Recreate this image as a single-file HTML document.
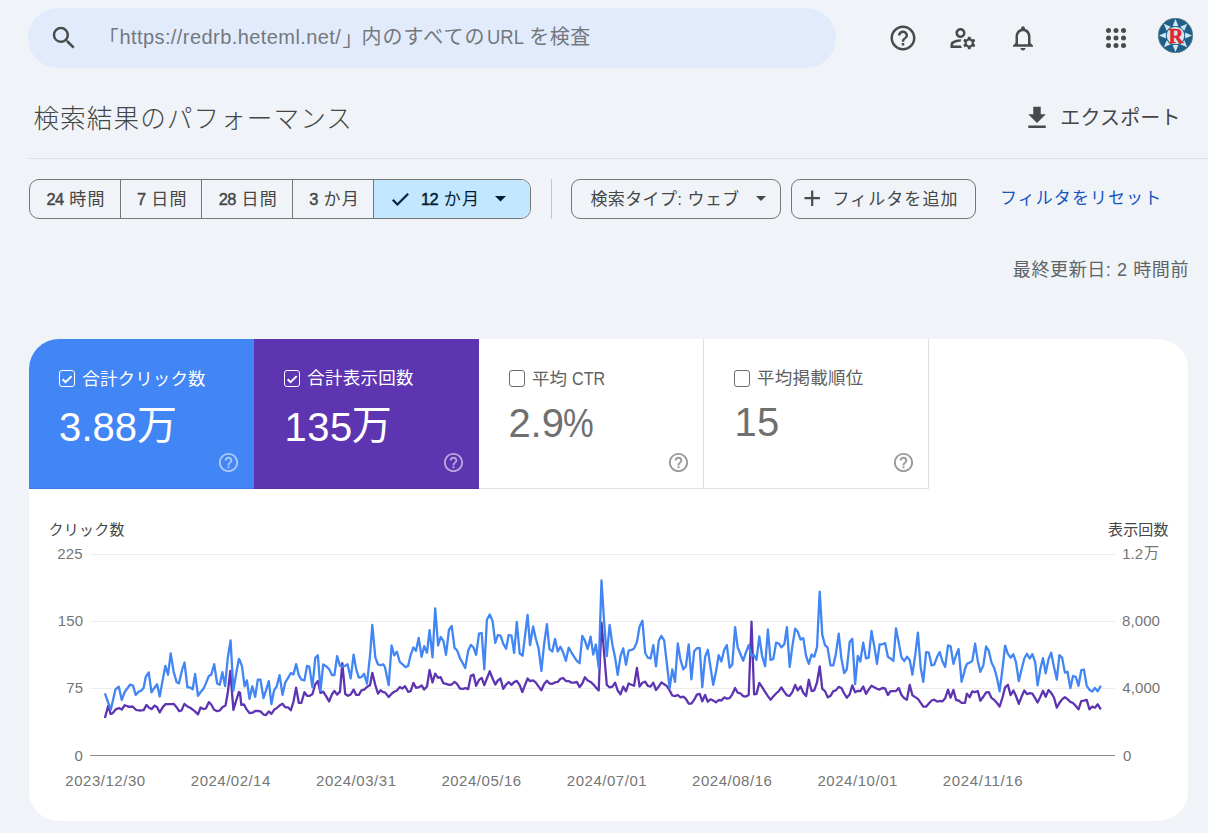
<!DOCTYPE html><html lang="ja"><head><meta charset="utf-8"><title>検索結果のパフォーマンス</title><style>
*{box-sizing:border-box;margin:0;padding:0}
html,body{width:1208px;height:833px;overflow:hidden}
body{background:#f0f4f9;font-family:"Liberation Sans","Noto Sans CJK JP",sans-serif;color:#444746;position:relative}
.abs{position:absolute}
.t{position:absolute;white-space:nowrap;line-height:1;transform-origin:0 50%}
svg{position:absolute;display:block;overflow:visible}
#search{left:28px;top:8px;width:808px;height:60px;border-radius:30px;background:#e2ebfc}
#hr{left:28px;top:158px;width:1180px;height:1px;background:#dde1e6}
.chip{position:absolute;top:179px;height:40px;border:1px solid #747775;border-radius:9px}
#vsep{left:551px;top:179px;width:1px;height:40px;background:#c4c7c5}
#card{left:29px;top:339px;width:1159px;height:482px;border-radius:30px;background:#fff;overflow:hidden}
.tile{position:absolute;top:0;width:225px;height:150px}
.cb{position:absolute;width:16.500px;height:16.500px;border:1.500px solid #fff;border-radius:3px}
</style></head><body>
<div class="abs" id="search"></div>
<svg style="left:48.75px;top:23.25px" width="30" height="30" viewBox="0 0 24 24" ><path fill="#484a4c" d="M15.5 14h-.79l-.28-.27A6.471 6.471 0 0 0 16 9.5 6.5 6.5 0 1 0 9.5 16c1.61 0 3.09-.59 4.23-1.57l.27.28v.79l5 4.99L20.49 19l-4.99-5zm-6 0C7.01 14 5 11.99 5 9.500S7.010 5 9.500 5 14 7.010 14 9.500 11.990 14 9.500 14z"/></svg>
<div class="abs" style="left:0;top:0"><span class="t" style="font-size:20px;color:#74777c;left:98.5px;top:29.2px;">「</span><span class="t" style="font-size:20px;color:#74777c;left:119.38px;top:27.17px;letter-spacing:0.43px;">https://redrb.heteml.net/</span><span class="t" style="font-size:20px;color:#74777c;left:342.6px;top:29.2px;">」</span><span class="t" style="font-size:20px;color:#74777c;left:361.48px;top:27.33px;letter-spacing:1.04px;">内のすべての</span> <span class="t" style="font-size:20px;color:#74777c;left:487.43px;top:27.17px;transform:scaleX(0.922);">URL</span> <span class="t" style="font-size:20px;color:#74777c;left:529.17px;top:27.33px;letter-spacing:0.57px;">を検査</span></div>
<svg style="left:888.00px;top:23.00px" width="30" height="30" viewBox="0 0 24 24" ><path fill="#484a4c" d="M11 18h2v-2h-2v2zm1-16C6.480 2 2 6.480 2 12s4.480 10 10 10 10-4.480 10-10S17.520 2 12 2zm0 18c-4.410 0-8-3.590-8-8s3.590-8 8-8 8 3.590 8 8-3.590 8-8 8zm0-14c-2.210 0-4 1.790-4 4h2c0-1.100.9-2 2-2s2 .9 2 2c0 2-3 1.750-3 5h2c0-2.250 3-2.500 3-5 0-2.210-1.790-4-4-4z"/></svg>
<svg style="left:948.00px;top:23.00px" width="30" height="30" viewBox="0 0 24 24" ><path fill="#484a4c" d="M4 18v-.65c0-.34.16-.66.41-.81C6.100 15.530 8.030 15 10 15c.03 0 .05 0 .08.01.1-.7.3-1.370.59-1.980-.22-.02-.44-.03-.67-.03-2.420 0-4.680.67-6.610 1.820-.88.52-1.390 1.500-1.390 2.530V20h9.260c-.42-.6-.75-1.280-.97-2H4z M10 12c2.210 0 4-1.790 4-4s-1.790-4-4-4-4 1.790-4 4 1.790 4 4 4zm0-6c1.100 0 2 .9 2 2s-.9 2-2 2-2-.9-2-2 .9-2 2-2z M20.750 16c0-.22-.03-.42-.06-.63l1.140-1.010-1-1.730-1.450.49c-.32-.27-.68-.48-1.080-.63L18 11h-2l-.3 1.490c-.4.15-.76.36-1.080.63l-1.450-.49-1 1.730 1.140 1.010c-.03.21-.06.41-.06.63s.03.42.06.63l-1.140 1.010 1 1.730 1.450-.49c.32.27.68.48 1.080.63L16 21h2l.3-1.490c.4-.15.76-.36 1.080-.63l1.450.49 1-1.730-1.140-1.010c.03-.21.06-.41.06-.63zM17 18c-1.100 0-2-.9-2-2s.9-2 2-2 2 .9 2 2-.9 2-2 2z"/></svg>
<svg style="left:1008.00px;top:23.00px" width="30" height="30" viewBox="0 0 24 24" ><path fill="#484a4c" d="M12 22c1.100 0 2-.9 2-2h-4c0 1.100.9 2 2 2zm6-6v-5c0-3.070-1.630-5.640-4.500-6.320V4c0-.83-.67-1.500-1.500-1.500s-1.500.67-1.500 1.500v.68C7.640 5.360 6 7.920 6 11v5l-2 2v1h16v-1l-2-2zm-2 1H8v-6c0-2.480 1.510-4.500 4-4.500s4 2.020 4 4.500v6z"/></svg>
<svg style="left:1101px;top:23px" width="30" height="30" viewBox="0 0 24 24" fill="#484a4c"><circle cx="6" cy="6" r="2" /><circle cx="6" cy="12" r="2" /><circle cx="6" cy="18" r="2" /><circle cx="12" cy="6" r="2" /><circle cx="12" cy="12" r="2" /><circle cx="12" cy="18" r="2" /><circle cx="18" cy="6" r="2" /><circle cx="18" cy="12" r="2" /><circle cx="18" cy="18" r="2" /></svg>
<svg style="left:1157.80px;top:17.80px" width="35" height="35" viewBox="-17.5 -17.5 35 35"><circle r="17.5" fill="#1d5f88"/><circle r="17.1" fill="none" stroke="#b9a878" stroke-width="0.700" opacity=".55"/><g fill="#cfe6f4"><polygon points="0,-16.5 -2.9,-9.6 2.900,-9.6" transform="rotate(0)"/><polygon points="0,-16.5 -2.9,-9.6 2.900,-9.6" transform="rotate(45)"/><polygon points="0,-16.5 -2.9,-9.6 2.900,-9.6" transform="rotate(90)"/><polygon points="0,-16.5 -2.9,-9.6 2.900,-9.6" transform="rotate(135)"/><polygon points="0,-16.5 -2.9,-9.6 2.900,-9.6" transform="rotate(180)"/><polygon points="0,-16.5 -2.9,-9.6 2.900,-9.6" transform="rotate(225)"/><polygon points="0,-16.5 -2.9,-9.6 2.900,-9.6" transform="rotate(270)"/><polygon points="0,-16.5 -2.9,-9.6 2.900,-9.6" transform="rotate(315)"/></g><circle r="8.8" fill="#d3e4ef"/><text x="0.300" y="7" text-anchor="middle" font-family="Liberation Serif,serif" font-weight="bold" font-size="20.500" fill="#e0262b" stroke="#e0262b" stroke-width="0.500">R</text></svg>
<div class="t" style="font-size:25.6px;color:#444746;font-family:'Noto Sans CJK JP',sans-serif;font-weight:300;left:33.45px;top:104.31px;letter-spacing:1.08px;">検索結果のパフォーマンス</div>
<svg style="left:1021.60px;top:103.10px" width="30" height="30" viewBox="0 0 24 24" ><path fill="#484a4c" d="M19 9h-4V3H9v6H5l7 7 7-7zM5 18v2h14v-2H5z"/></svg>
<div class="t" style="font-size:20px;color:#444746;left:1060.28px;top:108.25px;letter-spacing:0.16px;">エクスポート</div>
<div class="abs" id="hr"></div>
<div class="abs" style="left:29px;top:179px;width:502px;height:40px;border:1px solid #747775;border-radius:10px;overflow:hidden"><div class="abs" style="left:344px;top:0;width:158px;height:38px;background:#c2e7ff"></div><div class="abs" style="left:90px;top:0;width:1px;height:38px;background:#747775"></div><div class="abs" style="left:171px;top:0;width:1px;height:38px;background:#747775"></div><div class="abs" style="left:262px;top:0;width:1px;height:38px;background:#747775"></div><div class="abs" style="left:343px;top:0;width:1px;height:38px;background:#747775"></div></div>
<div class="t" style="font-size:17px;color:#444746;left:46.5px;top:190.82px;letter-spacing:1.2px;"><span style="-webkit-text-stroke:.45px currentColor;font-size:16.4px;letter-spacing:-.7px">24</span> 時間</div>
<div class="t" style="font-size:17px;color:#444746;left:137.05px;top:190.82px;letter-spacing:1.17px;"><span style="-webkit-text-stroke:.45px currentColor;font-size:16.4px;letter-spacing:-.7px">7</span> 日間</div>
<div class="t" style="font-size:17px;color:#444746;left:218.75px;top:190.82px;letter-spacing:1.2px;"><span style="-webkit-text-stroke:.45px currentColor;font-size:16.4px;letter-spacing:-.7px">28</span> 日間</div>
<div class="t" style="font-size:17px;color:#444746;left:309.25px;top:190.82px;letter-spacing:1.2px;"><span style="-webkit-text-stroke:.45px currentColor;font-size:16.4px;letter-spacing:-.7px">3</span> か月</div>
<div class="t" style="font-size:17px;color:#001d35;left:421.1px;top:190.82px;letter-spacing:1.2px;"><span style="-webkit-text-stroke:.45px currentColor;font-size:16.4px;letter-spacing:-.7px">12</span> か月</div>
<svg style="left:389.35px;top:187.75px" width="22.5" height="22.5" viewBox="0 0 24 24" stroke="#001d35" stroke-width=".5"><path fill="#001d35" d="M9 16.170L4.830 12l-1.420 1.410L9 19 21 7l-1.410-1.410z"/></svg>
<svg style="left:495.400px;top:196.200px" width="11" height="5.500" viewBox="0 0 10 5"><path d="M0 0h10L5 5z" fill="#001d35"/></svg>
<div class="abs" id="vsep"></div>
<div class="chip" style="left:571px;width:210px"></div>
<div class="t" style="font-size:17px;color:#444746;left:590.42px;top:190.7px;letter-spacing:0.39px;">検索タイプ: ウェブ</div>
<svg style="left:755.500px;top:196.300px" width="10" height="5" viewBox="0 0 10 5"><path d="M0 0h10L5 5z" fill="#444746"/></svg>
<div class="chip" style="left:791px;width:185px"></div>
<svg style="left:799.20px;top:185.40px" width="26.4" height="26.4" viewBox="0 0 24 24" ><path fill="#484a4c" d="M19 13h-6v6h-2v-6H5v-2h6V5h2v6h6v2z"/></svg>
<div class="t" style="font-size:17px;color:#444746;left:832.38px;top:190.7px;letter-spacing:1.08px;">フィルタを追加</div>
<div class="t" style="font-size:17px;color:#1555bf;left:1000.0px;top:190.25px;letter-spacing:1.06px;">フィルタをリセット</div>
<div class="t" style="font-size:18px;color:#5f6368;left:1012.83px;top:260.77px;letter-spacing:0.6px;">最終更新日: 2 時間前</div>
<div class="abs" id="card">
<div class="tile" style="left:0px;background:#4285f4"><div class="abs" style="left:0;bottom:0;width:225px;height:1px;background:rgba(0,0,0,.07)"></div></div>
<div class="tile" style="left:225px;background:#5e35b1"><div class="abs" style="left:0;bottom:0;width:225px;height:1px;background:rgba(0,0,0,.07)"></div></div>
<div class="tile" style="left:450px;background:#fff;border-right:1px solid #e0e0e0;border-bottom:1px solid #e0e0e0"></div>
<div class="tile" style="left:675px;background:#fff;border-right:1px solid #e0e0e0;border-bottom:1px solid #e0e0e0"></div>
</div>
<div class="cb" style="left:58.8px;top:370.400px;border-color:#fff"></div><svg style="left:60.0px;top:371.600px" width="14" height="14" viewBox="0 0 24 24"><path fill="none" stroke="#fff" stroke-width="3.400" d="M4.500 12.500l5 5L20 7"/></svg>
<svg style="left:216.80px;top:451.10px" width="23" height="23" viewBox="0 0 24 24"><path fill="rgba(255,255,255,.55)" d="M11 18h2v-2h-2v2zm1-16C6.480 2 2 6.480 2 12s4.480 10 10 10 10-4.480 10-10S17.520 2 12 2zm0 18c-4.410 0-8-3.590-8-8s3.590-8 8-8 8 3.590 8 8-3.590 8-8 8zm0-14c-2.210 0-4 1.790-4 4h2c0-1.100.9-2 2-2s2 .9 2 2c0 2-3 1.750-3 5h2c0-2.250 3-2.500 3-5 0-2.210-1.790-4-4-4z"/></svg>
<div class="cb" style="left:283.8px;top:370.400px;border-color:#fff"></div><svg style="left:285.0px;top:371.600px" width="14" height="14" viewBox="0 0 24 24"><path fill="none" stroke="#fff" stroke-width="3.400" d="M4.500 12.500l5 5L20 7"/></svg>
<svg style="left:441.80px;top:451.10px" width="23" height="23" viewBox="0 0 24 24"><path fill="rgba(255,255,255,.55)" d="M11 18h2v-2h-2v2zm1-16C6.480 2 2 6.480 2 12s4.480 10 10 10 10-4.480 10-10S17.520 2 12 2zm0 18c-4.410 0-8-3.590-8-8s3.590-8 8-8 8 3.590 8 8-3.590 8-8 8zm0-14c-2.210 0-4 1.790-4 4h2c0-1.100.9-2 2-2s2 .9 2 2c0 2-3 1.750-3 5h2c0-2.250 3-2.500 3-5 0-2.210-1.790-4-4-4z"/></svg>
<div class="cb" style="left:508.8px;top:370.400px;border-color:#6e6e6e;background:#fff"></div>
<svg style="left:666.80px;top:451.10px" width="23" height="23" viewBox="0 0 24 24"><path fill="#9a9a9a" d="M11 18h2v-2h-2v2zm1-16C6.480 2 2 6.480 2 12s4.480 10 10 10 10-4.480 10-10S17.520 2 12 2zm0 18c-4.410 0-8-3.590-8-8s3.590-8 8-8 8 3.590 8 8-3.590 8-8 8zm0-14c-2.210 0-4 1.790-4 4h2c0-1.100.9-2 2-2s2 .9 2 2c0 2-3 1.750-3 5h2c0-2.250 3-2.500 3-5 0-2.210-1.790-4-4-4z"/></svg>
<div class="cb" style="left:733.8px;top:370.400px;border-color:#6e6e6e;background:#fff"></div>
<svg style="left:891.80px;top:451.10px" width="23" height="23" viewBox="0 0 24 24"><path fill="#9a9a9a" d="M11 18h2v-2h-2v2zm1-16C6.480 2 2 6.480 2 12s4.480 10 10 10 10-4.480 10-10S17.520 2 12 2zm0 18c-4.410 0-8-3.590-8-8s3.590-8 8-8 8 3.590 8 8-3.590 8-8 8zm0-14c-2.210 0-4 1.790-4 4h2c0-1.100.9-2 2-2s2 .9 2 2c0 2-3 1.750-3 5h2c0-2.250 3-2.500 3-5 0-2.210-1.790-4-4-4z"/></svg>
<div class="t" style="font-size:17.5px;color:#fff;left:82.32px;top:370.92px;letter-spacing:0.12px;">合計クリック数</div>
<div class="t" style="font-size:17.5px;color:#fff;left:307.23px;top:370.14px;letter-spacing:0.24px;">合計表示回数</div>
<div class="t" style="font-size:17.5px;color:#616161;left:531.98px;top:370.73px;letter-spacing:-0.08px;">平均 <span style="display:inline-block;transform:scaleX(.92);transform-origin:0 50%;margin-right:-2.7px;letter-spacing:0">CTR</span></div>
<div class="t" style="font-size:17.5px;color:#616161;left:757.1px;top:370.14px;letter-spacing:0.24px;">平均掲載順位</div>
<div class="abs" style="left:0;top:0"><span class="t" style="font-size:40px;color:#fff;left:59.12px;top:407.45px;letter-spacing:0.02px;">3.88</span><span class="t" style="font-size:40px;color:#fff;left:137.1px;top:405.19px;">万</span></div>
<div class="abs" style="left:0;top:0"><span class="t" style="font-size:40px;color:#fff;left:284.5px;top:407.4px;letter-spacing:0.5px;">135</span><span class="t" style="font-size:40px;color:#fff;left:351.85px;top:405.04px;">万</span></div>
<div class="abs" style="left:0;top:0"><span class="t" style="font-size:40px;color:#707070;left:508.38px;top:403.13px;letter-spacing:-0.02px;">2.9</span><span class="t" style="font-size:40px;color:#707070;left:562.98px;top:403.13px;transform:scaleX(0.864);">%</span></div>
<div class="t" style="font-size:40px;color:#707070;left:734.42px;top:402.33px;letter-spacing:0.35px;">15</div>
<svg style="left:0;top:0" width="1208" height="833" viewBox="0 0 1208 833"><rect x="90" y="554" width="1025" height="1" fill="#ededed"/><rect x="90" y="621" width="1025" height="1" fill="#ededed"/><rect x="90" y="688" width="1025" height="1" fill="#ededed"/><rect x="90" y="755" width="1025" height="1" fill="#8c8c8c"/><polyline fill="none" stroke="#5e35b1" stroke-width="2.300" stroke-linejoin="round" points="104.9,718.0 108.2,705.8 110.6,714.0 112.8,713.1 116.1,709.1 119.4,708.2 121.8,709.5 124.7,705.2 128.0,706.5 130.0,706.9 132.6,706.5 135.9,709.8 139.2,710.5 143.6,710.2 146.5,704.9 149.1,707.8 151.8,709.1 154.4,705.6 157.1,707.2 159.7,712.4 163.0,706.9 165.6,704.1 170.9,704.1 173.8,703.9 176.6,707.2 179.1,711.1 181.5,710.5 184.4,703.9 187.4,706.5 190.1,707.8 194.7,711.1 198.0,714.4 200.6,707.5 203.3,709.1 205.9,708.5 208.8,702.1 211.2,704.5 214.2,709.8 217.1,711.1 219.8,710.5 222.4,707.2 225.5,705.6 227.7,693.3 230.3,670.8 233.4,709.8 236.0,701.2 238.9,692.0 240.0,692.9 241.3,704.8 244.0,704.5 246.6,709.4 249.5,713.0 252.5,712.7 255.2,711.0 257.8,711.0 260.5,711.4 263.8,714.7 266.0,715.0 268.8,711.4 271.4,713.8 274.1,709.8 276.7,708.1 279.6,705.5 282.5,703.7 285.3,707.4 288.2,707.4 290.8,710.3 293.5,701.5 296.1,687.6 298.8,702.8 301.4,702.8 304.4,692.2 307.1,695.8 309.7,695.8 312.4,694.2 315.3,684.3 317.9,681.0 320.5,692.9 323.2,691.6 326.5,696.9 329.1,701.5 332.0,694.2 334.4,690.9 337.1,694.6 340.0,691.6 342.3,663.2 345.2,694.0 348.0,695.8 350.7,694.5 353.6,689.6 356.2,694.9 358.8,694.9 361.5,690.3 364.1,689.6 367.0,687.0 370.1,685.0 372.3,672.8 375.3,685.0 378.0,693.6 380.6,690.3 383.3,692.2 385.0,692.4 388.7,697.0 391.6,693.7 394.2,691.8 396.9,690.4 399.8,687.1 402.2,688.5 405.1,686.2 408.1,691.8 410.7,691.1 413.4,682.9 416.0,687.8 419.1,687.1 421.6,685.5 424.2,689.5 427.0,686.5 429.6,670.0 432.5,682.5 435.2,673.7 438.1,677.9 440.7,677.2 443.4,683.2 446.0,683.8 449.0,684.9 451.7,684.5 454.6,681.9 457.0,683.8 459.9,688.5 462.9,688.8 465.5,688.2 468.2,689.1 470.8,675.9 473.5,674.6 476.1,685.8 479.0,679.9 481.7,677.9 484.3,685.2 486.9,678.5 489.7,671.3 492.6,678.5 495.3,684.5 497.9,680.5 500.5,678.5 503.2,688.8 506.1,684.5 508.7,682.1 511.5,684.9 514.1,682.1 516.8,680.9 519.7,685.2 522.3,692.0 525.0,685.2 527.6,678.5 530.0,681.1 533.1,680.4 535.9,682.7 538.6,686.6 541.4,690.2 544.0,684.3 546.9,680.8 549.5,683.5 552.3,683.8 555.0,682.4 557.8,681.9 560.4,678.8 563.1,678.0 565.9,681.1 568.7,681.1 571.4,682.7 574.2,682.7 576.8,681.9 579.6,687.1 582.3,683.5 584.9,677.2 587.7,680.4 590.6,681.9 593.2,684.3 595.9,687.4 598.7,690.5 601.5,622.6 606.8,685.0 609.6,687.4 612.4,686.6 615.1,682.7 617.7,690.5 620.5,694.4 623.2,686.6 626.0,691.3 628.6,683.5 631.5,684.7 634.1,685.8 636.9,667.9 639.6,686.6 642.4,682.7 645.2,681.6 647.8,685.8 650.5,686.6 653.3,682.7 656.0,690.0 658.8,686.6 661.4,682.4 664.2,684.3 666.9,686.1 669.7,690.5 672.3,695.5 675.0,696.1 677.8,695.0 680.5,697.4 683.3,696.6 685.9,698.9 688.7,703.6 691.4,703.6 694.2,699.7 696.9,694.6 699.7,693.8 702.3,701.3 705.1,695.0 707.8,701.7 710.6,699.3 713.2,700.5 716.0,702.4 718.7,700.0 721.4,700.5 724.2,697.4 726.8,698.6 729.6,698.2 732.3,694.3 735.1,688.0 737.7,692.7 740.6,693.5 743.2,696.1 746.0,696.6 748.7,695.0 751.5,621.7 754.1,694.3 756.5,693.9 759.3,682.9 762.1,687.2 765.1,691.9 767.9,696.1 770.5,699.7 773.3,696.6 776.1,693.5 778.8,691.1 781.4,687.5 784.3,691.9 786.9,695.3 789.7,695.8 792.4,691.9 795.2,684.9 797.8,690.4 800.6,686.5 803.3,692.7 806.1,696.1 808.8,679.7 811.6,691.1 814.2,690.4 817.0,682.5 819.7,666.5 822.3,688.8 825.0,691.1 827.8,697.4 830.5,695.8 833.3,691.1 835.9,690.4 838.7,686.9 841.4,688.0 844.2,693.5 846.8,697.7 849.7,694.3 852.3,685.4 855.1,692.2 857.8,690.8 860.3,691.1 863.2,686.5 866.0,693.9 868.7,689.6 871.5,685.7 874.2,687.2 877.0,688.8 879.6,689.6 882.4,688.0 885.1,688.5 887.9,695.0 890.5,691.1 893.4,691.1 896.0,691.1 898.8,688.0 901.5,695.0 904.3,698.2 906.9,699.7 909.7,684.9 912.4,695.3 915.2,697.1 917.9,698.9 920.7,702.8 923.3,706.7 926.1,706.7 928.8,703.6 931.6,700.5 934.3,699.7 937.1,701.6 939.7,701.0 942.5,701.3 945.2,698.2 948.0,689.6 950.6,697.7 953.4,689.9 956.1,700.0 958.6,700.5 961.6,702.8 964.4,702.8 965.0,703.0 966.9,693.6 969.7,697.2 972.3,691.3 975.1,692.1 977.8,691.0 980.3,700.7 983.3,696.8 986.1,692.4 988.7,692.1 991.5,697.9 994.2,699.9 997.0,703.0 999.6,706.6 1002.5,697.5 1005.1,687.4 1007.9,684.8 1010.6,695.2 1013.4,690.5 1016.0,696.0 1018.8,703.8 1021.5,696.8 1024.3,690.5 1027.0,694.1 1029.8,693.2 1032.4,693.6 1035.2,698.3 1037.6,702.5 1040.4,696.8 1043.0,690.8 1045.7,696.8 1048.5,690.1 1051.2,692.9 1054.0,697.5 1056.8,707.7 1059.4,703.0 1062.1,699.4 1064.9,697.2 1067.5,699.1 1070.4,701.9 1073.0,703.0 1075.8,706.1 1078.5,709.3 1081.3,701.1 1083.9,700.7 1086.7,699.9 1089.4,709.3 1092.2,706.6 1094.9,707.7 1097.7,704.3 1100.8,709.3"/><polyline fill="none" stroke="#4285f4" stroke-width="2.300" stroke-linejoin="round" points="104.9,693.3 110.8,709.8 115.5,689.3 118.8,686.7 121.8,699.9 124.7,692.0 130.0,684.7 133.0,685.6 135.7,694.9 139.2,691.3 141.2,690.6 143.6,688.0 145.8,676.8 148.7,672.4 151.5,692.4 153.8,688.7 157.1,684.3 159.7,696.6 162.3,682.1 165.4,665.8 168.0,674.8 170.7,653.4 173.6,671.5 176.6,682.1 178.9,683.4 182.2,669.5 184.5,662.5 187.4,687.3 189.8,687.3 192.7,689.3 195.1,673.9 198.0,695.9 200.6,692.0 203.5,688.7 205.9,683.4 208.8,676.1 211.2,674.8 214.2,664.2 217.1,683.4 219.8,684.7 222.4,672.2 225.1,686.0 227.7,658.3 230.6,640.5 233.4,690.6 236.3,672.8 238.9,659.0 240.0,660.6 242.0,666.5 244.6,686.3 246.9,680.4 249.5,698.9 252.3,686.3 255.2,696.9 257.8,679.7 260.5,679.7 263.5,698.2 266.0,690.3 268.8,681.0 271.4,704.1 274.1,690.3 276.7,686.3 279.6,675.1 282.5,694.9 285.3,682.3 288.2,677.7 290.8,673.1 293.5,674.4 296.1,664.1 298.8,675.1 301.4,679.7 304.4,680.4 307.1,665.8 309.3,666.5 312.4,687.0 315.3,657.9 317.9,655.3 320.5,690.9 323.2,664.5 326.5,666.5 329.1,669.1 332.0,675.1 334.4,675.1 337.1,656.2 340.0,665.8 342.3,666.5 345.2,665.8 347.6,664.3 350.7,678.4 353.6,654.6 356.2,669.1 358.8,677.7 361.5,677.1 364.1,673.8 367.0,683.7 370.1,654.6 372.3,624.9 375.3,657.3 378.0,664.5 380.6,665.2 383.3,664.3 385.0,667.3 388.7,685.2 391.6,645.5 394.2,655.4 396.9,651.7 399.8,662.0 402.8,664.7 405.5,667.1 408.1,666.0 410.7,654.8 413.4,647.5 416.0,650.8 418.7,638.0 421.6,656.8 424.2,646.2 427.0,652.8 429.6,630.1 432.5,657.4 435.2,608.3 438.1,645.5 440.7,637.0 443.4,640.9 446.0,654.8 449.0,629.7 451.7,626.0 454.6,648.2 457.0,650.2 459.9,658.1 462.9,663.4 465.2,668.0 468.2,650.8 470.8,644.9 473.5,647.5 476.1,654.8 479.0,633.7 481.7,633.0 484.3,669.3 486.9,619.8 489.7,614.5 492.6,621.1 495.3,642.9 497.9,635.0 500.5,635.6 503.2,643.6 506.1,648.8 508.7,635.0 511.5,635.6 514.1,652.8 516.8,622.0 519.7,653.5 522.6,655.7 527.6,614.8 530.0,645.2 533.1,626.5 535.9,639.0 538.6,648.4 541.4,671.0 544.0,645.2 546.9,624.2 549.5,649.1 552.3,651.5 555.0,639.0 557.8,651.5 560.4,646.8 563.1,652.3 565.9,660.8 568.7,647.6 571.4,652.3 574.2,656.9 576.8,660.8 579.6,663.2 582.3,635.9 584.9,640.6 587.7,649.1 590.6,636.7 593.2,654.6 595.9,644.5 598.7,667.9 601.5,580.5 604.1,621.8 606.8,656.2 609.6,624.9 612.4,644.5 615.1,657.7 617.7,674.9 620.5,656.2 623.2,648.4 626.0,664.7 628.6,650.7 631.5,649.9 634.1,648.4 636.9,642.1 639.6,626.5 642.4,620.7 645.2,653.0 647.8,657.7 650.5,658.5 653.3,645.2 656.0,666.3 658.8,640.6 661.4,635.9 664.2,640.6 666.9,664.0 669.7,688.2 672.3,669.4 675.0,681.8 677.8,643.5 680.5,659.9 683.3,669.3 685.9,666.2 688.7,644.3 691.4,679.4 694.2,651.3 696.9,648.2 699.7,648.2 702.3,687.2 705.1,656.8 707.8,649.8 710.6,667.7 713.2,684.9 716.0,671.6 718.7,655.2 721.4,661.5 724.2,649.8 726.8,645.1 729.6,667.7 732.3,664.6 735.1,627.1 737.7,647.4 740.6,654.5 743.2,660.7 746.0,652.1 748.7,645.1 751.5,656.0 754.1,655.2 756.5,659.9 759.3,636.5 762.1,656.0 765.1,666.2 767.9,629.5 770.5,659.9 773.3,659.1 776.1,642.7 778.8,643.5 781.4,647.4 784.3,644.3 786.9,627.1 789.7,666.9 792.4,645.9 795.2,628.7 797.8,631.8 800.6,639.6 803.3,638.1 806.1,656.0 808.8,663.8 811.6,654.5 814.2,656.8 817.0,647.4 819.7,591.6 822.3,634.9 825.0,645.1 827.5,647.4 830.5,665.4 833.3,665.4 835.9,653.7 838.7,633.7 841.4,658.4 844.2,673.2 846.8,669.3 849.7,642.0 852.3,638.8 855.1,684.1 857.8,656.0 860.3,661.5 863.2,642.7 866.0,658.4 868.7,657.6 871.5,631.0 874.2,645.9 877.0,663.8 879.6,644.3 882.4,644.3 885.1,643.1 887.9,656.8 890.5,658.4 893.4,661.0 896.0,628.4 898.8,642.7 901.5,657.6 904.3,661.0 906.9,656.8 909.7,659.9 912.4,674.7 915.2,655.2 917.9,632.6 920.7,667.7 923.3,681.8 926.1,652.1 928.8,652.6 931.6,665.4 934.3,664.6 937.1,656.8 939.7,652.1 942.5,661.5 945.2,666.9 948.0,645.4 950.6,646.3 953.4,663.8 956.1,655.2 958.6,649.0 961.6,681.8 964.4,671.6 965.0,668.7 966.9,664.0 969.7,662.4 972.3,660.9 975.1,643.7 977.8,660.9 980.3,671.8 983.3,665.6 986.1,646.5 988.7,650.7 991.5,662.4 994.2,667.9 997.0,678.0 999.6,691.3 1002.5,668.7 1005.1,645.6 1007.9,653.8 1010.6,657.7 1013.4,654.3 1016.0,662.4 1018.8,681.2 1021.5,669.5 1024.3,658.5 1027.0,653.8 1029.8,658.5 1032.4,654.2 1035.2,662.4 1037.6,685.4 1040.4,668.7 1043.0,658.1 1045.7,673.4 1048.5,659.3 1051.2,652.6 1054.0,667.1 1056.8,679.6 1059.4,655.1 1062.1,657.7 1064.9,672.6 1067.5,671.8 1070.4,688.2 1073.0,676.0 1075.8,676.8 1078.5,685.8 1081.3,670.2 1083.9,669.5 1086.7,685.8 1089.4,689.7 1092.2,691.6 1094.9,687.9 1097.7,691.3 1100.8,685.8"/></svg>
<div class="abs" style="left:0;top:0"><span class="t" style="font-size:15px;color:#757575;left:1122.25px;top:545.91px;">1.2</span><span class="t" style="font-size:15px;color:#757575;left:1144.1px;top:545.05px;">万</span></div>
<div class="t" style="font-size:15px;color:#444746;left:48.4px;top:522.36px;letter-spacing:0.25px;">クリック数</div>
<div class="t" style="font-size:15px;color:#444746;left:1107.95px;top:522.0px;letter-spacing:0.2px;">表示回数</div>
<div class="t" style="font-size:15px;color:#757575;left:57.32px;top:545.79px;letter-spacing:0.1px;">225</div>
<div class="t" style="font-size:15px;color:#757575;left:57.8px;top:612.79px;letter-spacing:0.1px;">150</div>
<div class="t" style="font-size:15px;color:#757575;left:66.2px;top:680.47px;letter-spacing:0.1px;">75</div>
<div class="t" style="font-size:15px;color:#757575;left:74.53px;top:748.15px;">0</div>
<div class="t" style="font-size:15px;color:#757575;left:1122.03px;top:613.0px;letter-spacing:0.1px;">8,000</div>
<div class="t" style="font-size:15px;color:#757575;left:1122.28px;top:680.04px;letter-spacing:0.1px;">4,000</div>
<div class="t" style="font-size:15px;color:#757575;left:1123.12px;top:747.7px;">0</div>
<div class="t" style="font-size:15px;color:#757575;left:65.35px;top:773.05px;letter-spacing:0.52px;">2023/12/30</div>
<div class="t" style="font-size:15px;color:#757575;left:190.82px;top:773.05px;letter-spacing:0.49px;">2024/02/14</div>
<div class="t" style="font-size:15px;color:#757575;left:316.05px;top:773.05px;letter-spacing:0.54px;">2024/03/31</div>
<div class="t" style="font-size:15px;color:#757575;left:441.4px;top:773.05px;letter-spacing:0.52px;">2024/05/16</div>
<div class="t" style="font-size:15px;color:#757575;left:566.75px;top:773.05px;letter-spacing:0.54px;">2024/07/01</div>
<div class="t" style="font-size:15px;color:#757575;left:692.1px;top:773.05px;letter-spacing:0.52px;">2024/08/16</div>
<div class="t" style="font-size:15px;color:#757575;left:817.45px;top:773.05px;letter-spacing:0.54px;">2024/10/01</div>
<div class="t" style="font-size:15px;color:#757575;left:942.8px;top:773.05px;letter-spacing:0.66px;">2024/11/16</div>
</body></html>
